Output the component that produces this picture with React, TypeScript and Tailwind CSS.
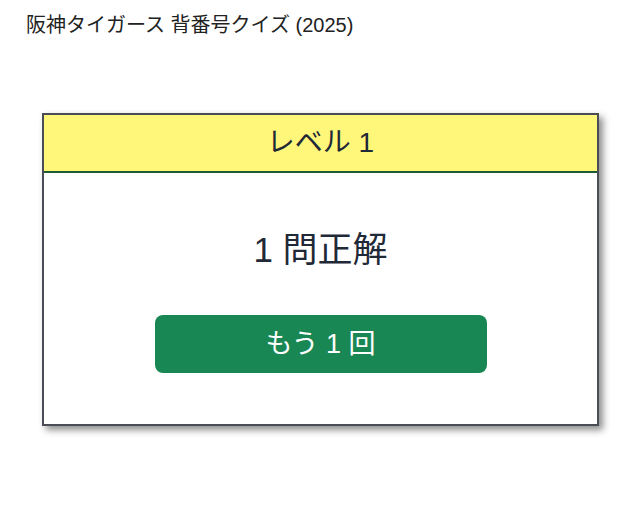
export default function App() {
  return (
    <div
      className="min-h-[520px] bg-white pl-[26px] pt-[12px] text-[#222]"
      style={{ fontFamily: '"Liberation Sans", "Noto Sans CJK JP", sans-serif' }}
    >
      <h1 className="text-[20px] leading-[26px]">阪神タイガース 背番号クイズ (2025)</h1>

      <div className="ml-4 mt-[75px] w-[557px] border-2 border-[#4a4d55] bg-white shadow-[4px_4px_7px_rgba(0,0,0,0.45)]">
        {/* Header */}
        <div className="flex h-[58px] items-center justify-center border-b-2 border-[#1f5c36] bg-[#fef77a]">
          <span className="text-[28px] text-[#1f2937]">レベル 1</span>
        </div>

        {/* Result */}
        <div className="flex flex-col items-center pb-[51px] pt-[52px]">
          <p className="text-[35px] leading-[50px] text-[#1f2937]">1 問正解</p>
          <button className="mt-[40px] h-[58px] w-[332px] rounded-lg bg-[#198754] text-[27px] text-white">
            もう 1 回
          </button>
        </div>
      </div>
    </div>
  )
}
